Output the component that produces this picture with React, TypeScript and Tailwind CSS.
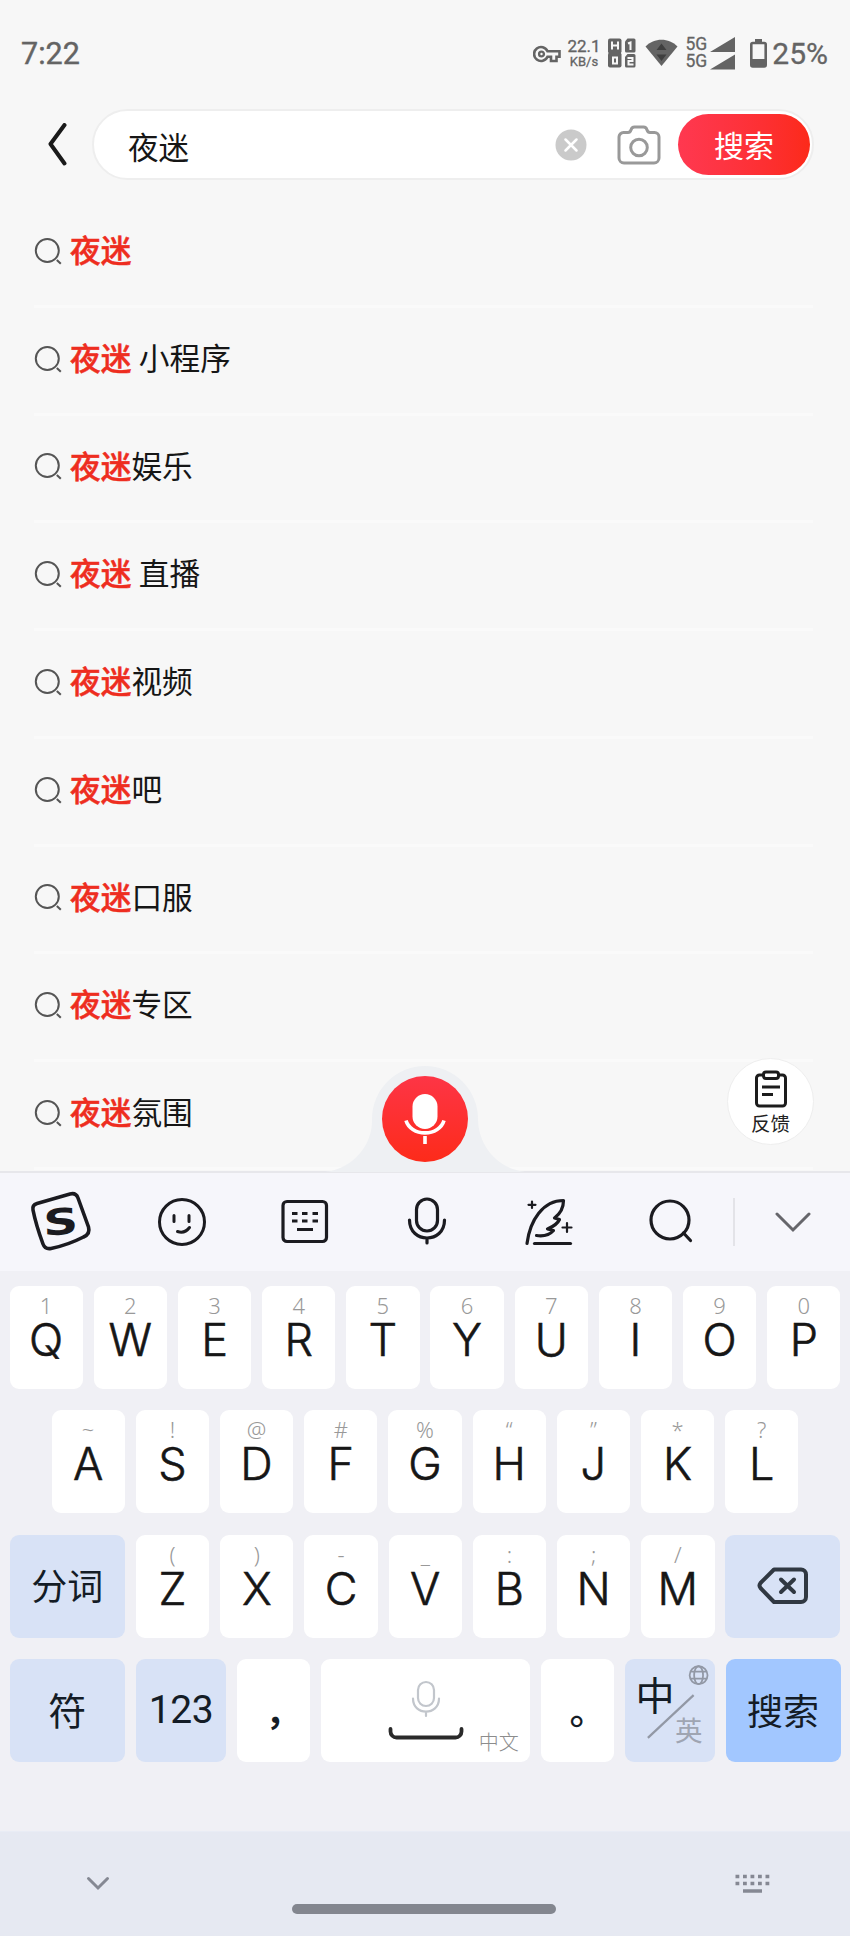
import type { ReactNode } from 'react';

interface Suggestion {
    id: number;
    text: string;
}

interface LetterKey {
    letter: string;
    hint: string;
}

const suggestions: Suggestion[] = [
    { id: 1, text: '' },
    { id: 2, text: ' 小程序' },
    { id: 3, text: '娱乐' },
    { id: 4, text: ' 直播' },
    { id: 5, text: '视频' },
    { id: 6, text: '吧' },
    { id: 7, text: '口服' },
    { id: 8, text: '专区' },
    { id: 9, text: '氛围' },
];

const toKeys = (letters: string, hints: string): LetterKey[] =>
    letters.split('').map((letter, i) => ({ letter, hint: hints[i] }));

const firstRow = toKeys('QWERTYUIOP', '1234567890');
const secondRow = toKeys('ASDFGHJKL', '~!@#%“”*?');
const thirdRow = toKeys('ZXCVBNM', '()-_:;/');

function StatusBar() {
    return (
        <header className="flex h-[109px] items-center pb-[1px] pl-[21px] pr-[22px] font-['Roboto',sans-serif] text-[#646464]">
            <span className="text-[30.5px] leading-none [-webkit-text-stroke:0.4px]">7:22</span>
            <div className="ml-auto flex items-center">
                <svg width="28" height="18" viewBox="0 0 28 18" fill="none" stroke="currentColor">
                    <path d="M14.5 6.2A7 7 0 1 0 14.5 11.8H18V16H23.5V11.8H26.5V6.2Z" strokeWidth="2.6" />
                    <circle cx="8.5" cy="9" r="2.4" strokeWidth="2.4" />
                </svg>
                <div className="ml-[8px] mb-[2px] flex w-[31px] flex-col items-center leading-none [-webkit-text-stroke:0.3px]">
                    <span className="text-[17px] leading-[18px]">22.1</span>
                    <span className="text-[13px] leading-[14px]">KB/s</span>
                </div>
                <svg className="ml-[8px] mb-[2px]" width="28" height="30" viewBox="0 0 28 30">
                    <g fill="currentColor">
                        <rect x="0" y="0.5" width="13.5" height="15" rx="2" />
                        <rect x="0" y="14.5" width="13.5" height="15" rx="2" />
                        <path d="M19.5 .5H26A1.5 1.5 0 0 1 27.5 2V13A1.5 1.5 0 0 1 26 14.5H18.5A1.5 1.5 0 0 1 17 13V3.5z" />
                        <path d="M19.5 16H26A1.5 1.5 0 0 1 27.5 17.5V28A1.5 1.5 0 0 1 26 29.5H18.5A1.5 1.5 0 0 1 17 28V19z" />
                    </g>
                    <g fill="none" stroke="#f7f7f7" strokeWidth="2">
                        <path d="M4 3.5v8M10 3.5v8M4 7.5h6" />
                        <rect x="5" y="19.5" width="4" height="6" />
                        <path d="M20 5.5l2.5-1V12M19.5 20h5v3h-4v3.5h5" />
                    </g>
                </svg>
                <svg className="ml-[9px] mb-[2px]" width="33" height="28" viewBox="0 0 33 28">
                    <path fill="currentColor" d="M.5 7.5C9-1.5 24-1.5 32.5 7.5L16.5 27z" />
                    <path fill="#3f3f3f" d="M16.5 4.5l5 6.5h-10zM16.5 22l5-6.5h-10z" />
                </svg>
                <div className="ml-[8px] mb-[2px] flex flex-col text-[17.5px] leading-[17.5px] [-webkit-text-stroke:0.3px]">
                    <span>5G</span>
                    <span>5G</span>
                </div>
                <svg className="ml-[3px] mb-[2px]" width="25" height="33" viewBox="0 0 25 33" fill="currentColor">
                    <path d="M25 0v15H0zM25 17.5v15H0z" />
                </svg>
                <svg className="ml-[15px] mb-[2px]" width="17" height="29" viewBox="0 0 17 29">
                    <rect x="5" y="0" width="7" height="5" fill="currentColor" />
                    <rect x="1.3" y="4" width="14.4" height="23.5" rx="1.5" fill="none" stroke="currentColor" strokeWidth="2.6" />
                    <rect x="1.5" y="20" width="14" height="8" fill="currentColor" />
                </svg>
                <span className="ml-[5px] text-[30px] leading-none [-webkit-text-stroke:0.3px]">25%</span>
            </div>
        </header>
    );
}

function SearchBar() {
    return (
        <div className="flex h-[71px] items-center pl-[47px] pr-[36px]">
            <svg width="21" height="44" viewBox="0 0 21 44" fill="none" stroke="#1a1a1a" strokeWidth="4" strokeLinecap="round" strokeLinejoin="round">
                <path d="M17.5 2L3.5 21l14 19.5" />
            </svg>
            <div className="ml-[24px] flex h-[71px] flex-1 items-center rounded-full border-2 border-[#eeeeee] bg-white pl-[34px] pr-[2px]">
                <span className="pt-[3px] text-[30.5px] leading-none text-[#161616]">夜迷</span>
                <svg className="ml-auto" width="32" height="32" viewBox="0 0 32 32">
                    <circle cx="16" cy="16" r="15.5" fill="#cacaca" />
                    <path d="M10.5 10.5l11 11M21.5 10.5l-11 11" stroke="#fff" strokeWidth="2.5" strokeLinecap="round" />
                </svg>
                <svg className="ml-[30px]" width="44" height="40" viewBox="0 0 44 40" fill="none" stroke="#999999" strokeWidth="3" strokeLinejoin="round">
                    <path d="M6.5 7.5h4.5c2 0 2.5-1 3-2.5.5-2 1.5-3 3.5-3h9c2 0 3 1 3.5 3 .5 1.5 1 2.5 3 2.5h4.500a4.500 4.500 0 0 1 4.500 4.500v21a5 5 0 0 1-5 5h-30a5 5 0 0 1-5-5V12a4.500 4.500 0 0 1 4.500-4.500z" />
                    <circle cx="22" cy="22.5" r="8.3" />
                </svg>
                <button className="ml-[17px] h-[61px] w-[132px] rounded-full bg-gradient-to-r from-[#ff3850] to-[#fc2a19] pb-[2px] text-[30px] leading-none text-white">
                    搜索
                </button>
            </div>
        </div>
    );
}

function SuggestionList() {
    return (
        <ul className="h-[991px] overflow-hidden pl-[34px] pr-[37px] pt-[20px]">
            {suggestions.map((item) => (
                <li
                    key={item.id}
                    className="flex h-[107.75px] items-center border-b-[3px] border-[#fafafa] pb-[3px]"
                >
                    <svg width="30" height="30" viewBox="0 0 30 30" fill="none" stroke="#555555" strokeWidth="2">
                        <circle cx="13.3" cy="14.5" r="11.5" />
                        <path d="M22.8 24l4 3.8" />
                    </svg>
                    <p className="ml-[6px] whitespace-pre pb-[3px] text-[30.7px] leading-none text-[#161616] [word-spacing:0.5px]">
                        <b className="font-medium text-[#ee2d20] [-webkit-text-stroke:0.5px]">夜迷</b>
                        {item.text}
                    </p>
                </li>
            ))}
        </ul>
    );
}

function VoiceButton() {
    return (
        <svg className="absolute left-[325px] top-[1065px]" width="200" height="107" viewBox="0 0 200 107">
            <path
                fill="#eef0f3"
                d="M0 107C30 103 48 78 47 54a53 53 0 0 1 106 0C153 78 170 103 200 107z"
            />
            <defs>
                <linearGradient id="voice" x1="0" y1="0" x2="0" y2="1">
                    <stop offset="0" stopColor="#fd3546" />
                    <stop offset="1" stopColor="#fd2b1a" />
                </linearGradient>
            </defs>
            <circle cx="100" cy="54" r="43" fill="url(#voice)" />
            <rect x="87.5" y="29" width="25" height="35" rx="12.5" fill="#fff" />
            <path d="M81 55.5a19.5 16 0 0 0 38 0M100 71v8" fill="none" stroke="#fff" strokeWidth="3.6" />
        </svg>
    );
}

function FeedbackButton() {
    return (
        <button className="absolute left-[727px] top-[1058px] flex h-[87px] w-[87px] flex-col items-center rounded-full border border-[#eeeeee] bg-white pt-[11px]">
            <svg width="34" height="38" viewBox="0 0 34 38" fill="none" stroke="#1c1c1c" strokeWidth="3" strokeLinejoin="round">
                <path d="M9.5 5H5.5a3 3 0 0 0-3 3v25a3 3 0 0 0 3 3h23a3 3 0 0 0 3-3V8a3 3 0 0 0-3-3h-4" />
                <rect x="9.5" y="2" width="15" height="6.5" rx="2.5" />
                <path d="M8 17h18M8 24.5h11" />
            </svg>
            <span className="mt-[4px] text-[19.5px] leading-[22px] text-[#222222]">反馈</span>
        </button>
    );
}

function Toolbar() {
    return (
        <div className="flex h-[100px] items-center border-t-2 border-[#e7e7eb] bg-[#f6f6fb] pb-[1px] pl-[29px] text-[#1b1b20]">
            <svg width="64" height="64" viewBox="0 0 64 64">
                <path
                    d="M8 13.5L41 4q6-1.5 8 4l10.5 29q2 7-5 10Q39 55 22 58.5q-6 1-8-4.5Q7 35 4 20q-1-5 4-6.5z"
                    fill="none"
                    stroke="currentColor"
                    strokeWidth="3.6"
                />
                <text
                    transform="translate(32 44.5) rotate(-5) skewX(-4) scale(1.35 1)"
                    textAnchor="middle"
                    className="font-['DejaVu_Sans',sans-serif] text-[36px] font-bold"
                    fill="currentColor"
                >
                    S
                </text>
            </svg>
            <svg className="ml-[64px]" width="50" height="50" viewBox="0 0 50 50" fill="none" stroke="currentColor" strokeWidth="3">
                <circle cx="25" cy="25" r="22.5" />
                <path d="M17 18.5v6M32 18.5v6M20.5 34.5c5 1.8 9 0 12-4" strokeLinecap="round" />
            </svg>
            <svg className="ml-[73px]" width="50" height="46" viewBox="0 0 50 46" fill="none" stroke="currentColor" strokeWidth="3.2">
                <rect x="3" y="2.5" width="43.5" height="40" rx="4" />
                <path d="M12 14.5h5.5M22 14.5h5.5M32.5 14.5H38M12 22h5.5M22 22h5.5M32.5 22H38M17 30.5h16" />
            </svg>
            <svg className="ml-[76px]" width="42" height="50" viewBox="0 0 42 50" fill="none" stroke="currentColor" strokeWidth="3.2" strokeLinecap="round">
                <rect x="10.5" y="2" width="21" height="32" rx="10.5" />
                <path d="M3.5 23C3.5 47 38.5 47 38.5 23M21 41.5V46" />
            </svg>
            <svg className="ml-[75px]" width="52" height="50" viewBox="0 0 52 50" fill="none" stroke="currentColor" strokeWidth="3.2" strokeLinecap="round" strokeLinejoin="round">
                <path d="M4 46.5C7 23 20 3.5 40.5 3.5c0 7-3 13-9 17.5l5 1.5c-2 4.5-6 7-12 9.5l6 1.5c-4 4.5-10 6-17 5" />
                <path d="M11.5 46.5h36" />
                <path d="M9 4.5v6.5M5.5 7.8h7M44 26v9M39.5 30.5h9" strokeWidth="2.2" />
            </svg>
            <svg className="ml-[73px]" width="46" height="46" viewBox="0 0 46 46" fill="none" stroke="currentColor" strokeWidth="3.2" strokeLinecap="round">
                <circle cx="22" cy="21" r="19" />
                <path d="M35.5 34l7 7.5" />
            </svg>
            <div className="ml-[39px] h-[48px] w-[2px] bg-[#e3e3e8]" />
            <svg className="ml-[40px]" width="36" height="22" viewBox="0 0 36 22" fill="none" stroke="#66666b" strokeWidth="3" strokeLinecap="round">
                <path d="M2 3l16 16L34 3" />
            </svg>
        </div>
    );
}

function LetterCap({ letter, hint }: LetterKey) {
    return (
        <button className="flex h-[103px] w-[73.3px] flex-col items-center rounded-[9px] bg-white pt-[7px]">
            <span className="h-[24px] font-['Noto_Sans',sans-serif] text-[22px] font-light leading-[24px] text-[#999999]">
                {hint}
            </span>
            <span className="mt-[3px] h-[40px] font-['Inter',sans-serif] text-[45px] font-light leading-[40px] text-[#161616] [-webkit-text-stroke:0.6px]">
                {letter}
            </span>
        </button>
    );
}

function FunctionKey({ className, children }: { className: string; children: ReactNode }) {
    return (
        <button className={`flex h-[103px] items-center justify-center rounded-[9px] leading-none text-[#141c26] ${className}`}>
            {children}
        </button>
    );
}

function Keyboard() {
    return (
        <div className="flex h-[560px] flex-col gap-[21.5px] bg-[#f0f0f5] px-[9.5px] pt-[14.5px]">
            <div className="flex justify-between">
                {firstRow.map((key) => (
                    <LetterCap key={key.letter} {...key} />
                ))}
            </div>
            <div className="flex justify-between px-[42px]">
                {secondRow.map((key) => (
                    <LetterCap key={key.letter} {...key} />
                ))}
            </div>
            <div className="flex justify-between">
                <FunctionKey className="w-[115.5px] bg-[#d8e2f6] pb-[4px] text-[36px]">分词</FunctionKey>
                {thirdRow.map((key) => (
                    <LetterCap key={key.letter} {...key} />
                ))}
                <FunctionKey className="w-[115px] bg-[#d8e2f6]">
                    <svg width="52" height="40" viewBox="0 0 52 40" fill="none" stroke="#303842" strokeWidth="4" strokeLinecap="round" strokeLinejoin="round">
                        <path d="M17 3.5h27a5 5 0 0 1 5 5v22.5a5 5 0 0 1-5 5H17L3.5 22q-2-2.5 0-5z" />
                        <path d="M24 13.5L37 26M37 13.5L24 26" />
                    </svg>
                </FunctionKey>
            </div>
            <div className="flex justify-between">
                <FunctionKey className="w-[115.5px] bg-[#d8e2f6] pb-[4px] text-[38px]">符</FunctionKey>
                <FunctionKey className="w-[90px] bg-[#d8e2f6] font-['Roboto',sans-serif] text-[39px] tracking-[-0.5px]">
                    123
                </FunctionKey>
                <FunctionKey className="w-[73.3px] bg-white pb-[3px] pl-[19px] text-[35px] font-bold">，</FunctionKey>
                <FunctionKey className="relative w-[208.5px] bg-white">
                    <svg width="76" height="62" viewBox="0 0 76 62" fill="none" strokeLinecap="round">
                        <g stroke="#c2c6cc" strokeWidth="2.2">
                            <rect x="30" y="2" width="16" height="24" rx="8" />
                            <path d="M25 18.5C25 36 51 36 51 18.5M38 32v4" />
                        </g>
                        <path d="M2.5 49v2.5a6 6 0 0 0 6 6h59a6 6 0 0 0 6-6V49" stroke="#2a2a2a" strokeWidth="3.8" />
                    </svg>
                    <span className="absolute bottom-[10px] right-[11px] text-[20px] font-light text-[#8c8c8c]">中文</span>
                </FunctionKey>
                <FunctionKey className="w-[73.3px] bg-white pb-[2px] pl-[21px] text-[37px] font-medium">。</FunctionKey>
                <FunctionKey className="relative w-[89.5px] bg-[#d8e2f6]">
                    <svg width="90" height="103" viewBox="0 0 90 103" fill="none" stroke="#9298a5" strokeWidth="1.8">
                        <circle cx="74" cy="16" r="9" />
                        <ellipse cx="74" cy="16" rx="4.5" ry="9" />
                        <path d="M66 12.5h16M66 19.5h16" />
                        <path d="M23 79l46-43" strokeWidth="2.2" />
                    </svg>
                    <span className="absolute left-[10.5px] top-[15px] text-[39px]">中</span>
                    <span className="absolute left-[50px] top-[57px] text-[27.5px] text-[#9fa5b2]">英</span>
                </FunctionKey>
                <FunctionKey className="w-[115px] bg-[#a2c7ff] pb-[3px] text-[36px]">搜索</FunctionKey>
            </div>
        </div>
    );
}

function NavigationBar() {
    return (
        <footer className="flex h-[105px] items-start justify-between border-t border-[#e9ecf5] bg-[#e6e9f2] pl-[86px] pr-[80px] pt-[42px]">
            <svg className="mt-[2px]" width="24" height="15" viewBox="0 0 24 15" fill="none" stroke="#858893" strokeWidth="3" strokeLinecap="round">
                <path d="M2.5 2.5L12 12l9.5-9.5" />
            </svg>
            <div className="ml-[2px] mt-[30px] h-[10px] w-[264px] rounded-full bg-[#83868f]" />
            <svg width="35" height="20" viewBox="0 0 35 20" fill="none" stroke="#858893">
                <path d="M.5 2.5h34M.5 9.5h34" strokeWidth="3.5" strokeDasharray="3.8 3.7" />
                <path d="M8 17h19" strokeWidth="3.5" />
            </svg>
        </footer>
    );
}

function App() {
    return (
        <main className="relative h-[1936px] w-[850px] overflow-hidden bg-[#f7f7f7] font-['Noto_Sans_CJK_SC',sans-serif]">
            <StatusBar />
            <SearchBar />
            <SuggestionList />
            <Toolbar />
            <Keyboard />
            <NavigationBar />
            <VoiceButton />
            <FeedbackButton />
        </main>
    );
}

export default App;
